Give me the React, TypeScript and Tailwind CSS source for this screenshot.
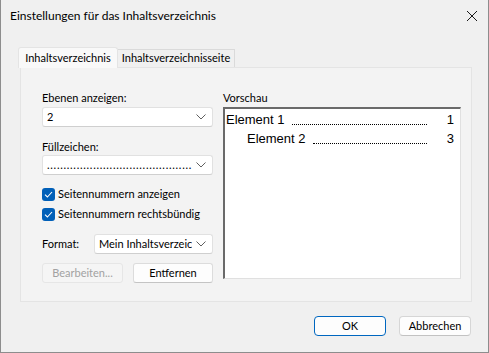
import React from "react";

const ui = { fontFamily: 'Lato, "Segoe UI", sans-serif' };
const arial = { fontFamily: '"Liberation Sans", Arial, sans-serif' };

function Chevron() {
    return (
        <svg width="10" height="6" viewBox="0 0 10 6" className="shrink-0">
            <path d="M0.5 0.5 L5 5 L9.5 0.5" fill="none" stroke="#5f5f5f" strokeWidth="1" />
        </svg>
    );
}

function Select({children, className = ""}: {children: React.ReactNode; className?: string}) {
    return (
        <div className={`flex h-[20px] items-center justify-between gap-[4px] overflow-hidden rounded-[3px] border border-[#e1e1e1] border-b-[#cfcfcf] bg-white pl-[4px] pr-[6px] ${className}`}>
            <div className="min-w-0 flex-1 overflow-hidden whitespace-nowrap">{children}</div>
            <Chevron />
        </div>
    );
}

function Check({label}: {label: string}) {
    return (
        <div className="flex h-[20px] items-center gap-[3px] whitespace-nowrap">
            <div className="flex h-[13px] w-[13px] shrink-0 items-center justify-center rounded-[3px] bg-[#005fb8]">
                <svg width="9" height="7" viewBox="0 0 9 7">
                    <path d="M1 3.6 L3.4 6 L8 1" fill="none" stroke="white" strokeWidth="1.1" />
                </svg>
            </div>
            <span>{label}</span>
        </div>
    );
}

function Entry({label, page, indent}: {label: string; page: string; indent?: boolean}) {
    return (
        <div className={`flex items-end whitespace-nowrap text-[13px] leading-[19px] text-black ${indent ? "pl-[21px]" : ""}`} style={arial}>
            <span>{label}</span>
            <span className="mb-[4px] ml-[7px] mr-[20px] flex-1 border-b border-dotted border-black" />
            <span className="pr-[2px]">{page}</span>
        </div>
    );
}

export default function App() {
    return (
        <div className="flex h-[353px] w-[489px] flex-col border-x border-b border-[#8d8d8d] bg-[#f0f0f0] text-[11px] text-black" style={ui}>
            <div className="flex h-[32px] shrink-0 items-center justify-between pl-[9px] pr-[10px]">
                <span className="text-[12px]">Einstellungen für das Inhaltsverzeichnis</span>
                <svg width="12" height="12" viewBox="0 0 12 12">
                    <path d="M1 1 L11 11 M11 1 L1 11" stroke="#1a1a1a" strokeWidth="1" />
                </svg>
            </div>

            <div className="mt-[15px] flex items-end pl-[17px]">
                <div className="z-10 -mb-px flex h-[21px] w-[100px] items-center justify-center rounded-t-[3px] border border-b-0 border-[#e4e4e4] bg-[#f9f9f9] text-[11px]">
                    Inhaltsverzeichnis
                </div>
                <div className="flex h-[18px] w-[117px] items-center justify-center border border-b-0 border-l-0 border-[#dadada] bg-[#f0f0f0] text-[11px]">
                    Inhaltsverzeichnisseite
                </div>
            </div>

            <div className="ml-[19px] flex h-[235px] w-[452px] gap-[10px] border border-[#e4e4e4] bg-[#f3f3f3] pl-[21px] pt-[22px]">
                <div className="flex w-[171px] flex-col">
                    <div className="h-[16px]">Ebenen anzeigen:</div>
                    <Select className="mt-[1px]">2</Select>
                    <div className="mt-[12px] h-[16px]">Füllzeichen:</div>
                    <Select>
                        <span className="tracking-[0.7px]">............................................</span>
                    </Select>
                    <div className="mt-[9px] flex flex-col">
                        <Check label="Seitennummern anzeigen" />
                        <Check label="Seitennummern rechtsbündig" />
                    </div>
                    <div className="mt-[10px] flex items-center justify-between">
                        <span>Format:</span>
                        <Select className="w-[119px]">Mein Inhaltsverzeichnis</Select>
                    </div>
                    <div className="mt-[9px] flex justify-between">
                        <button className="h-[20px] w-[81px] rounded-[3px] border border-[#e6e6e6] bg-[#f5f5f5] text-[#a2a2a2]">
                            Bearbeiten...
                        </button>
                        <button className="h-[20px] w-[80px] rounded-[3px] border border-[#dcdcdc] border-b-[#c4c4c4] bg-[#fdfdfd]">
                            Entfernen
                        </button>
                    </div>
                </div>

                <div className="flex w-[238px] flex-col">
                    <div className="h-[17px]">Vorschau</div>
                    <div className="h-[172px] border-l-2 border-t-2 border-r border-b border-l-[#6a6a6a] border-t-[#6a6a6a] border-r-[#e0e0e0] border-b-[#e0e0e0] bg-white pl-[1px] pr-[4px] pt-[1px]">
                        <Entry label="Element 1" page="1" />
                        <Entry label="Element 2" page="3" indent />
                    </div>
                </div>
            </div>

            <div className="mt-[14px] flex justify-end gap-[13px] pr-[17px]">
                <button className="h-[20px] w-[72px] rounded-[4px] border border-[#0067c0] bg-[#fdfdfd]">OK</button>
                <button className="h-[20px] w-[72px] rounded-[4px] border border-[#d6d6d6] border-b-[#c2c2c2] bg-[#fdfdfd]">Abbrechen</button>
            </div>
        </div>
    );
}
